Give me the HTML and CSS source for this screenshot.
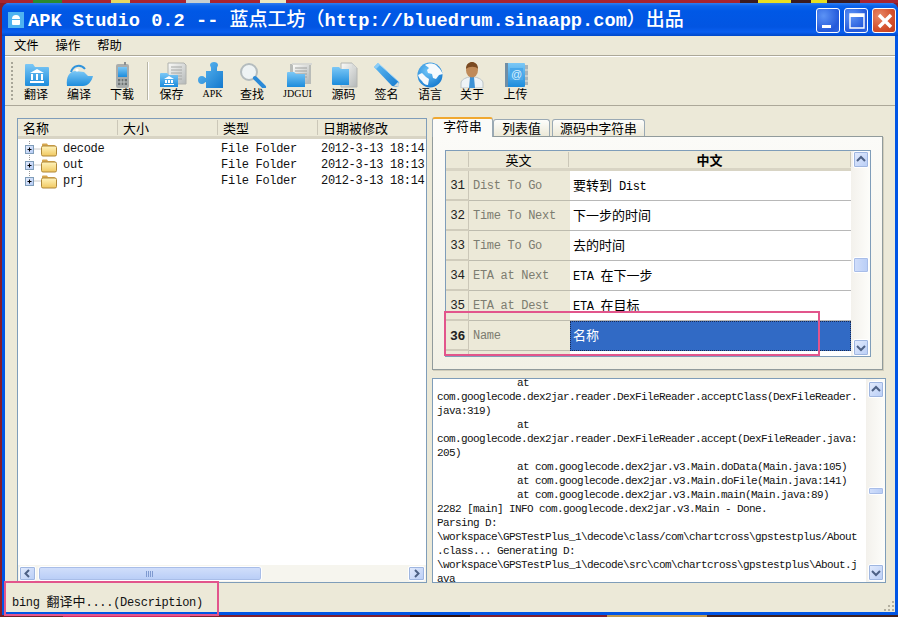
FILE: index.html
```html
<!DOCTYPE html>
<html lang="zh">
<head>
<meta charset="utf-8">
<title>APK Studio</title>
<link rel="stylesheet" href="styles.css">
</head>
<body>
<svg class="defs" width="0" height="0" aria-hidden="true">
  <defs>
    <linearGradient id="blue" x1="0" y1="0" x2="0" y2="1"><stop offset="0" stop-color="#7cc8f6"/><stop offset="1" stop-color="#1c8cdc"/></linearGradient>
    <linearGradient id="blue2" x1="0" y1="0" x2="1" y2="1"><stop offset="0" stop-color="#63bdf5"/><stop offset="1" stop-color="#1479cd"/></linearGradient>
    <linearGradient id="paper" x1="0" y1="0" x2="1" y2="1"><stop offset="0" stop-color="#fbfbf8"/><stop offset="1" stop-color="#b4b8b8"/></linearGradient>
    <linearGradient id="yellow" x1="0" y1="0" x2="0" y2="1"><stop offset="0" stop-color="#fff4bd"/><stop offset="1" stop-color="#f0c860"/></linearGradient>
    <radialGradient id="sea" cx=".4" cy=".35" r=".75"><stop offset="0" stop-color="#6cc4f8"/><stop offset="1" stop-color="#0f74cc"/></radialGradient>
    <linearGradient id="btn" x1="0" y1="0" x2="1" y2="1"><stop offset="0" stop-color="#e4ecfd"/><stop offset="1" stop-color="#b4caf5"/></linearGradient>
  </defs>
</svg>
<div class="desktop desktop-top"></div>
<div class="window">
  <header class="titlebar">
    <svg class="app-icon" width="16" height="16" viewBox="0 0 16 16"><rect width="16" height="16" fill="#4fb3f0"/><path d="M4 7a4 4 0 0 1 8 0zM4 8h8v4a1 1 0 0 1-1 1H5a1 1 0 0 1-1-1z" fill="#fff"/></svg>
    <div class="title">APK Studio 0.2 -- <span class="title-cjk">蓝点工坊（</span>http://bluedrum.sinaapp.com<span class="title-cjk">）出品</span></div>
    <div class="caption">
      <div class="cap cap-blue"><svg width="24" height="24" viewBox="0 0 24 24"><rect x="5" y="16" width="9" height="3" fill="#fff"/></svg></div>
      <div class="cap cap-blue"><svg width="24" height="24" viewBox="0 0 24 24"><path d="M5 5h14v14H5z" fill="none" stroke="#fff" stroke-width="1.4"/><rect x="5" y="5" width="14" height="3" fill="#fff"/></svg></div>
      <div class="cap cap-red"><svg width="24" height="24" viewBox="0 0 24 24"><path d="M6 6l12 12M18 6L6 18" stroke="#fff" stroke-width="3.4"/></svg></div>
    </div>
  </header>
  <nav class="menubar"><span>文件</span><span>操作</span><span>帮助</span></nav>
  <div class="toolbar">
    <div class="handle"></div>
    <div class="tools">
      <div class="tool"><svg width="32" height="26" viewBox="0 0 32 26"><path d="M5 3a1 1 0 0 1 1-1h7l2 3h13a1 1 0 0 1 1 1v17a1 1 0 0 1-1 1H6a1 1 0 0 1-1-1z" fill="url(#blue)"/><path d="M17 7l7 4H10zM11 12h2v6h-2zM16 12h2v6h-2zM21 12h2v6h-2zM10 19h14v2H10z" fill="#fff"/></svg><span>翻译</span></div>
      <div class="tool"><svg width="32" height="26" viewBox="0 0 32 26"><path d="M4 24c-1-9 2-14 8-15l9 1 4 4h5c-1 5-5 10-10 10z" fill="url(#blue)"/><path d="M8 10c2-7 10-8 14-3" fill="none" stroke="#2f93dc" stroke-width="2"/><circle cx="14" cy="8" r="1.6" fill="#fff"/></svg><span>编译</span></div>
      <div class="tool"><svg width="32" height="26" viewBox="0 0 32 26"><rect x="10" y="2" width="13" height="24" rx="2" fill="#a9adad"/><rect x="18" y="0" width="2" height="3" fill="#8c9090"/><rect x="12" y="5" width="9" height="10" fill="url(#blue)"/><path d="M12 17h9v6h-9z" fill="#6d7272"/><path d="M15 17v6M18 17v6M12 20h9" stroke="#c4c8c8"/></svg><span>下载</span></div>
      <div class="sep"></div>
      <div class="tool"><svg width="32" height="26" viewBox="0 0 32 26"><path d="M12 1h16l2 2v19H12z" fill="url(#paper)" stroke="#b0b2ae"/><path d="M15 5h11M15 8h11M15 11h11M15 14h11M15 17h11" stroke="#a6a8a6"/><path d="M4 12a1 1 0 0 1 1-1h6l2 2h9v12H4z" fill="url(#blue)"/><path d="M13 14l5 3H8zM9 18h2v3H9zM12 18h2v3h-2zM15 18h2v3h-2zM8 22h10v1H8z" fill="#fff"/></svg><span>保存</span></div>
      <div class="tool"><svg width="32" height="26" viewBox="0 0 32 26"><path d="M14 9V6c0-1-1-2-1-3 0-2 2-3 4-3s4 1 4 3c0 1-1 2-1 3v3h6v17H9v-6c-1 0-2 2-4 2-3 0-4-2-4-4s1-4 4-4c2 0 3 2 4 2V9z" fill="url(#blue2)"/></svg><span class="small">APK</span></div>
      <div class="tool"><svg width="32" height="26" viewBox="0 0 32 26"><circle cx="13" cy="10" r="8" fill="#eef3f4" stroke="#b4bcbe" stroke-width="2"/><path d="M19 16l9 9" stroke="#2b8ad8" stroke-width="4" stroke-linecap="round"/></svg><span>查找</span></div>
      <div class="tool"><svg width="32" height="26" viewBox="0 0 32 26"><path d="M8 2h21v20H8z" fill="#b9bcb8"/><path d="M10 1h20v2H10z" fill="#d8d9d4"/><path d="M11 3h16v18H11z" fill="url(#paper)"/><path d="M13 6h12M13 9h12M13 12h12M13 15h12" stroke="#9ea09e"/><path d="M5 11a1 1 0 0 1 1-1h6l2 2h9v13H5z" fill="url(#blue)"/></svg><span class="small">JDGUI</span></div>
      <div class="tool"><svg width="32" height="26" viewBox="0 0 32 26"><path d="M13 1h11l5 5v19H13z" fill="url(#paper)" stroke="#b4b6b2"/><path d="M24 1v5h5z" fill="#d8dad8"/><path d="M4 6a1 1 0 0 1 1-1h6l2 2h8v16H5a1 1 0 0 1-1-1z" fill="url(#blue)"/></svg><span>源码</span></div>
      <div class="tool"><svg width="32" height="26" viewBox="0 0 32 26"><path d="M3 5l4-4 21 19-1 5-6-1z" fill="url(#blue2)"/><path d="M7 1l21 19-1 5" fill="none" stroke="#a6d8f8"/><path d="M23 24l4-4 1 5z" fill="#d8dcd8"/><path d="M3 5l4-4 2 2-4 4z" fill="#8ccdf7"/></svg><span>签名</span></div>
      <div class="tool"><svg width="32" height="26" viewBox="0 0 32 26"><circle cx="16" cy="13" r="12.500" fill="url(#sea)"/><path d="M11 3c3-2 8-2 11 0l4 4 3 5-4 1-3 4-3-1-1-4-4-1-1-3 2-2zM4 13l4-2 4 4 3 2-1 6c-3 0-5-2-6-4-2-2-3-3-4-6z" fill="#f5fafd"/></svg><span>语言</span></div>
      <div class="tool"><svg width="32" height="26" viewBox="0 0 32 26"><path d="M5 26v-5c0-3 4-5 8-6h6c4 1 8 3 8 6v5z" fill="#eef3f6" stroke="#bcc4c8"/><path d="M14 15h4l1 11h-6z" fill="#3d92d6"/><ellipse cx="16" cy="8" rx="6" ry="7.500" fill="#c08a58"/><path d="M10 7c0-5 3-7 6-7s6 2 6 7c-2-3-9-3-12 0z" fill="#7a4a22"/></svg><span>关于</span></div>
      <div class="tool"><svg width="32" height="26" viewBox="0 0 32 26"><rect x="5" y="1" width="20" height="24" rx="1" fill="url(#blue)"/><rect x="5" y="1" width="3" height="24" fill="#6f8ea6"/><rect x="25" y="3" width="3" height="20" fill="#a8b4ba"/><path d="M25 8h3M25 14h3M25 19h3" stroke="#e8e8e0"/><rect x="10" y="6" width="13" height="12" fill="#4aa8ea"/><text x="16.500" y="15.500" class="at">@</text></svg><span>上传</span></div>
    </div>
  </div>
  <main class="content">
    <section class="tree">
      <div class="tree-head"><span>名称</span><span>大小</span><span>类型</span><span>日期被修改</span></div>
      <div class="tree-body">
        <div class="tree-row"><span class="name"><svg class="exp" width="22" height="16" viewBox="0 0 22 16"><path d="M6.500 0v16M6.500 8H18" stroke="#999" stroke-dasharray="1 1"/><rect x="2.500" y="4.500" width="8" height="8" fill="url(#btn)" stroke="#7f9db9"/><path d="M4.500 8.500h4M6.500 6.500v4" stroke="#000"/></svg><svg class="folder" width="18" height="15" viewBox="0 0 18 15"><path d="M2 4V2.500a1 1 0 0 1 1-1h4l1 1.500h6a1 1 0 0 1 1 1v1z" fill="#d8a850"/><rect x="1.500" y="4" width="15" height="10" rx="1.500" fill="url(#yellow)" stroke="#b08838"/></svg>decode</span><span></span><span>File Folder</span><span>2012-3-13 18:14</span></div>
        <div class="tree-row"><span class="name"><svg class="exp" width="22" height="16" viewBox="0 0 22 16"><path d="M6.500 0v16M6.500 8H18" stroke="#999" stroke-dasharray="1 1"/><rect x="2.500" y="4.500" width="8" height="8" fill="url(#btn)" stroke="#7f9db9"/><path d="M4.500 8.500h4M6.500 6.500v4" stroke="#000"/></svg><svg class="folder" width="18" height="15" viewBox="0 0 18 15"><path d="M2 4V2.500a1 1 0 0 1 1-1h4l1 1.500h6a1 1 0 0 1 1 1v1z" fill="#d8a850"/><rect x="1.500" y="4" width="15" height="10" rx="1.500" fill="url(#yellow)" stroke="#b08838"/></svg>out</span><span></span><span>File Folder</span><span>2012-3-13 18:13</span></div>
        <div class="tree-row"><span class="name"><svg class="exp" width="22" height="16" viewBox="0 0 22 16"><path d="M6.500 0v8.500M6.500 8H18" stroke="#999" stroke-dasharray="1 1"/><rect x="2.500" y="4.500" width="8" height="8" fill="url(#btn)" stroke="#7f9db9"/><path d="M4.500 8.500h4M6.500 6.500v4" stroke="#000"/></svg><svg class="folder" width="18" height="15" viewBox="0 0 18 15"><path d="M2 4V2.500a1 1 0 0 1 1-1h4l1 1.500h6a1 1 0 0 1 1 1v1z" fill="#d8a850"/><rect x="1.500" y="4" width="15" height="10" rx="1.500" fill="url(#yellow)" stroke="#b08838"/></svg>prj</span><span></span><span>File Folder</span><span>2012-3-13 18:14</span></div>
      </div>
      <div class="hscroll">
        <div class="sb-btn"><svg width="17" height="15" viewBox="0 0 17 15"><path d="M10 4L6.500 7.500 10 11" fill="none" stroke="#4d6185" stroke-width="2"/></svg></div>
        <div class="h-thumb"><span class="grip"></span></div>
        <div class="h-track"></div>
        <div class="sb-btn"><svg width="17" height="15" viewBox="0 0 17 15"><path d="M7 4l3.500 3.500L7 11" fill="none" stroke="#4d6185" stroke-width="2"/></svg></div>
      </div>
    </section>
    <section class="right">
      <div class="tabs">
        <div class="tab tab-on">字符串</div>
        <div class="tab tab-2">列表值</div>
        <div class="tab tab-3">源码中字符串</div>
      </div>
      <div class="pane">
        <div class="grid">
          <div class="table">
            <div class="thead"><span class="c0"></span><span class="c1">英文</span><span class="c2 strong">中文</span></div>
            <div class="row"><span class="c0">31</span><span class="c1">Dist To Go</span><span class="c2"><span class="cjk">要转到</span> Dist</span></div>
            <div class="row"><span class="c0">32</span><span class="c1">Time To Next</span><span class="c2"><span class="cjk">下一步的时间</span></span></div>
            <div class="row"><span class="c0">33</span><span class="c1">Time To Go</span><span class="c2"><span class="cjk">去的时间</span></span></div>
            <div class="row"><span class="c0">34</span><span class="c1">ETA at Next</span><span class="c2">ETA <span class="cjk">在下一步</span></span></div>
            <div class="row"><span class="c0">35</span><span class="c1">ETA at Dest</span><span class="c2">ETA <span class="cjk">在目标</span></span></div>
            <div class="row row-sel"><span class="c0">36</span><span class="c1">Name</span><span class="c2"><span class="cjk">名称</span></span></div>
            <div class="row"><span class="c0"></span><span class="c1"></span><span class="c2"></span></div>
          </div>
          <div class="vscroll vscroll-grid">
            <div class="sb-btn sb-v"><svg width="16" height="17" viewBox="0 0 16 17"><path d="M4 10l4-4 4 4" fill="none" stroke="#4d6185" stroke-width="2"/></svg></div>
            <div class="v-thumb thumb-grid"></div>
            <div class="sb-btn sb-v sb-end"><svg width="16" height="17" viewBox="0 0 16 17"><path d="M4 7l4 4 4-4" fill="none" stroke="#4d6185" stroke-width="2"/></svg></div>
          </div>
        </div>
      </div>
      <div class="log">
        <pre class="log-text">	at
com.googlecode.dex2jar.reader.DexFileReader.acceptClass(DexFileReader.
java:319)
	at
com.googlecode.dex2jar.reader.DexFileReader.accept(DexFileReader.java:
205)
	at com.googlecode.dex2jar.v3.Main.doData(Main.java:105)
	at com.googlecode.dex2jar.v3.Main.doFile(Main.java:141)
	at com.googlecode.dex2jar.v3.Main.main(Main.java:89)
2282 [main] INFO com.googlecode.dex2jar.v3.Main - Done.
Parsing D:
\workspace\GPSTestPlus_1\decode\class/com\chartcross\gpstestplus/About
.class... Generating D:
\workspace\GPSTestPlus_1\decode\src\com\chartcross\gpstestplus\About.j
ava</pre>
        <div class="vscroll vscroll-log">
          <div class="sb-btn sb-v"><svg width="16" height="17" viewBox="0 0 16 17"><path d="M4 10l4-4 4 4" fill="none" stroke="#4d6185" stroke-width="2"/></svg></div>
          <div class="v-thumb thumb-log"></div>
          <div class="sb-btn sb-v sb-end"><svg width="16" height="17" viewBox="0 0 16 17"><path d="M4 7l4 4 4-4" fill="none" stroke="#4d6185" stroke-width="2"/></svg></div>
        </div>
      </div>
    </section>
  </main>
  <footer class="status"><span>bing <span class="cjk">翻译中</span>....(Description)</span>
    <svg class="sizegrip" width="12" height="12" viewBox="0 0 12 12"><path d="M9 1h2v2H9zM5 5h2v2H5zM9 5h2v2H9zM1 9h2v2H1zM5 9h2v2H5zM9 9h2v2H9z" fill="#b4b0a0"/></svg>
  </footer>
</div>
<div class="desktop desktop-bottom"></div>
<div class="mark mark-row"></div>
<div class="mark mark-status"></div>
</body>
</html>
```
FILE: styles.css
```css
* { box-sizing: border-box; }
html, body { margin: 0; padding: 0; }
body {
  position: relative;
  width: 898px;
  height: 617px;
  overflow: hidden;
  background: #8a1c28;
  font-family: "Liberation Mono", "Noto Sans CJK SC", monospace;
  color: #000;
}
.defs { position: absolute; }
.cjk { font-family: "Noto Sans CJK SC", sans-serif; font-size: 13px; letter-spacing: 0; }
.desktop { height: 3px; }
.desktop-top {
  background: linear-gradient(90deg, #a82430 0 33px, #2a8a30 33px 62px, #a82430 62px 111px, #e8d860 111px 130px, #a82430 130px 186px, #c8d0d0 186px 210px, #a82430 210px 260px, #e8e8c0 260px 286px, #a82430 286px 740px, #3a1c20 740px 758px, #e8e020 758px 791px, #3a1c20 791px 811px, #e8e020 811px 827px, #3a1c20 827px 860px, #a82430 860px);
}
.desktop-bottom {
  height: 2px;
  background: linear-gradient(90deg, #702028 0 63px, #d02860 63px 190px, #802030 190px 410px, #301010 410px 470px, #802030 470px 607px, #c09850 607px 707px, #402020 707px);
}
.window {
  height: 612px;
  margin-left: 2px;
  width: 896px;
  display: flex;
  flex-direction: column;
  background: #ece9d8;
  border: solid #0055e5;
  border-width: 0 3px 3px 3px;
  border-radius: 7px 7px 0 0;
}
.titlebar {
  flex: none;
  height: 33px;
  margin: 0 -3px;
  display: flex;
  align-items: center;
  padding-left: 6px;
  border-radius: 7px 7px 0 0;
  background: linear-gradient(180deg, #2f7ff0 0, #0a62ea 3px, #0058e6 8px, #0255e2 24px, #0a5ff0 29px, #0048c8 33px);
}
.app-icon { flex: none; margin-top: 1px; }
.title {
  margin-left: 4px;
  font: bold 18.670px/33px "Liberation Mono", "Noto Sans CJK SC", monospace;
  color: #fff;
  white-space: pre;
}
.title-cjk { font: 500 19px/33px "Noto Sans CJK SC", sans-serif; }
.caption {
  margin-left: auto;
  display: flex;
  gap: 4px;
  padding-right: 2px;
  margin-top: 1px;
}
.cap {
  width: 24px;
  height: 25px;
  border: 1px solid #fff;
  border-radius: 3px;
}
.cap svg { display: block; }
.cap-blue { background: radial-gradient(circle at 30% 30%, #5c93f5, #2459da 70%, #2f66e0); }
.cap-red { background: radial-gradient(circle at 30% 30%, #e88868, #d4502c 60%, #c03c1c); }
.menubar {
  flex: none;
  height: 20px;
  display: flex;
  gap: 17px;
  align-items: center;
  padding-left: 9px;
  font: 12.300px/19px "Noto Sans CJK SC", sans-serif;
  border-bottom: 1px solid #aca899;
}
.toolbar {
  flex: none;
  height: 50px;
  display: flex;
  padding-left: 6px;
  border-top: 1px solid #fff;
  border-bottom: 1px solid #aca899;
}
.handle {
  flex: none;
  width: 2px;
  height: 38px;
  margin-top: 5px;
  border-left: 2px dotted #a8a698;
}
.tools {
  margin-left: 1.500px;
  display: grid;
  grid-template-columns: 43px 43px 43px 6.500px 43px 39px 40px 51px 41px 45px 42px 42px 45px;
}
.tool {
  display: flex;
  flex-direction: column;
  align-items: center;
  padding-top: 5px;
  font: 12px/14px "Noto Sans CJK SC", "Liberation Mono", sans-serif;
}
.tool svg { display: block; }
.tool span { margin-top: -1px; }
.tool .small { font: 10px/14px "Liberation Serif", serif; }
.at { font: 11px "Liberation Sans", sans-serif; fill: #d8f0ff; text-anchor: middle; }
.sep {
  width: 2px;
  height: 38px;
  margin: 5px 0 0 3px;
  border-left: 1px solid #b8b6a6;
  border-right: 1px solid #fff;
}
.content {
  flex: 1;
  min-height: 0;
  display: flex;
  gap: 5px;
  padding: 11px 9px 0 12px;
}
.tree {
  width: 410px;
  margin-top: 1px;
  display: flex;
  flex-direction: column;
  background: #fff;
  border: 1px solid #7f9db9;
}
.tree-head {
  flex: none;
  height: 20px;
  display: grid;
  grid-template-columns: 100px 100px 100px 1fr;
  background: #ece9d8;
  border-bottom: 3px solid #d8d4c4;
  font: 13px/17px "Noto Sans CJK SC", sans-serif;
}
.tree-head span { padding-left: 5px; border-right: 1px solid #cbc7b8; height: 15px; line-height: 15px; margin-top: 1px; }
.tree-head span:last-child { border-right: 0; }
.tree-body { flex: 1; padding-top: 2px; }
.tree-row {
  height: 16px;
  display: grid;
  grid-template-columns: 100px 100px 100px 1fr;
  font: 12px/16px "Liberation Mono", monospace;
  letter-spacing: -0.300px;
  color: #111;
  white-space: nowrap;
  overflow: hidden;
}
.tree-row span { padding-left: 3px; }
.tree-row .name { display: flex; align-items: center; padding-left: 5px; }
.exp { flex: none; margin-right: -5px; }
.folder { flex: none; margin-right: 5px; }
.hscroll {
  flex: none;
  height: 17px;
  display: flex;
  padding: 1px;
  background: #f6f5ee;
}
.sb-btn {
  flex: none;
  width: 17px;
  height: 15px;
  border: 1px solid #fff;
  border-radius: 2px;
  background: linear-gradient(135deg, #e4ecfd, #b8cdf6);
  box-shadow: 0 0 0 1px #9fb6e0 inset;
}
.sb-btn svg { display: block; margin: -1px; }
.h-thumb {
  flex: none;
  width: 224px;
  margin-left: 2px;
  display: flex;
  align-items: center;
  justify-content: center;
  border: 1px solid #fff;
  border-radius: 3px;
  background: linear-gradient(180deg, #d2dffb, #b8cdf6);
  box-shadow: 0 0 0 1px #a8bde8 inset;
}
.grip {
  width: 8px;
  height: 6px;
  background: repeating-linear-gradient(90deg, #7f9ad0 0 1px, transparent 1px 2px);
}
.h-track { flex: 1; }
.right { width: 454px; display: flex; flex-direction: column; }
.tabs {
  flex: none;
  height: 19px;
  display: flex;
  align-items: flex-end;
  font: 12.800px/16px "Noto Sans CJK SC", sans-serif;
  position: relative;
  z-index: 1;
}
.tab {
  height: 17px;
  text-align: center;
  border: 1px solid #9aa9b4;
  border-bottom: 0;
  border-radius: 3px 3px 0 0;
  background: linear-gradient(180deg, #fdfdfb, #ece9d8);
}
.tab-on {
  width: 61px;
  height: 20px;
  margin-bottom: -1px;
  border-top: 2px solid #f0a830;
  background: #fbfbf8;
  line-height: 14px;
}
.tab-2 { width: 57px; }
.tab-3 { width: 93px; margin-left: 2px; }
.pane {
  flex: none;
  width: 451px;
  height: 234px;
  padding: 13px 11px 0 12px;
  background: linear-gradient(180deg, #fbfbf8, #f2f1e6);
  border: 1px solid #919b9c;
  box-shadow: 1px 1px 0 #d0cdbc;
}
.grid {
  height: 207px;
  display: flex;
  border: 1px solid #7f9db9;
  background: #fff;
}
.table { flex: none; width: 405px; overflow: hidden; }
.thead {
  height: 20px;
  display: grid;
  grid-template-columns: 23px 100px 1fr;
  background: #ece9d8;
  border-bottom: 3px solid #d8d4c4;
  font: 13px/17px "Noto Sans CJK SC", sans-serif;
  text-align: center;
}
.thead span { border-right: 1px solid #cbc7b8; height: 15px; line-height: 15px; margin-top: 1px; }
.strong { font-weight: 700; }
.row {
  height: 30px;
  display: grid;
  grid-template-columns: 23px 101px 1fr;
  grid-template-rows: 30px;
  font: 12px/29px "Liberation Mono", "Noto Sans CJK SC", monospace;
  letter-spacing: -0.300px;
}
.row > span { overflow: hidden; }
.row .c0 {
  background: #ece9d8;
  border-right: 1px solid #cbc7b8;
  border-bottom: 2px solid #d0ccbc;
  text-align: center;
  padding-left: 1px;
  font-size: 12.500px;
  line-height: 31px;
  color: #222;
}
.row .c1 {
  background: #ece9d8;
  color: #7c7c70;
  padding-left: 4px;
  line-height: 31px;
  border-bottom: 1px solid #bdbbae;
}
.row .c2 {
  padding-left: 3px;
  line-height: 27px;
  border-bottom: 1px solid #b8b8b8;
  white-space: pre;
}
.row-sel .c0 { font-weight: 700; font-size: 13px; }
.row-sel .c2 {
  background: #316ac5;
  color: #fff;
  border: 1px dotted #1a2a50;
  padding-left: 2px;
  line-height: 25px;
}
.vscroll {
  flex: none;
  display: flex;
  flex-direction: column;
  align-items: center;
  background: linear-gradient(90deg, #f3f1ec, #fdfdfa);
}
.vscroll-grid { width: 19px; }
.vscroll-log { width: 19px; padding-top: 2px; padding-bottom: 1px; }
.sb-v { width: 16px; height: 17px; }
.v-thumb {
  flex: none;
  width: 16px;
  border: 1px solid #fff;
  border-radius: 2px;
  background: linear-gradient(90deg, #d2dffb, #b8cdf6);
  box-shadow: 0 0 0 1px #a8bde8 inset;
}
.thumb-grid { height: 16px; margin-top: 89px; }
.thumb-log { height: 8px; margin-top: 89px; }
.sb-end { margin-top: auto; }
.log {
  flex: 1;
  margin-top: 8px;
  display: flex;
  background: #fff;
  border: 1px solid #7f9db9;
  min-height: 0;
  overflow: hidden;
}
.log-text {
  flex: 1;
  margin: -3px 0 0;
  padding-left: 4px;
  font: 11px/14px "Liberation Mono", monospace;
  letter-spacing: -0.600px;
  tab-size: 80px;
  color: #111;
  overflow: hidden;
}
.status {
  flex: none;
  height: 29px;
  display: flex;
  align-items: flex-end;
  justify-content: space-between;
  padding-left: 7px;
  font: 12px/17px "Liberation Mono", "Noto Sans CJK SC", monospace;
  letter-spacing: -0.300px;
  color: #111;
}
.mark { position: absolute; border: 2px solid #e2558c; }
.mark-row { left: 444px; top: 311px; width: 376px; height: 45px; }
.mark-status { left: 4px; top: 581px; width: 215px; height: 35px; }
```
